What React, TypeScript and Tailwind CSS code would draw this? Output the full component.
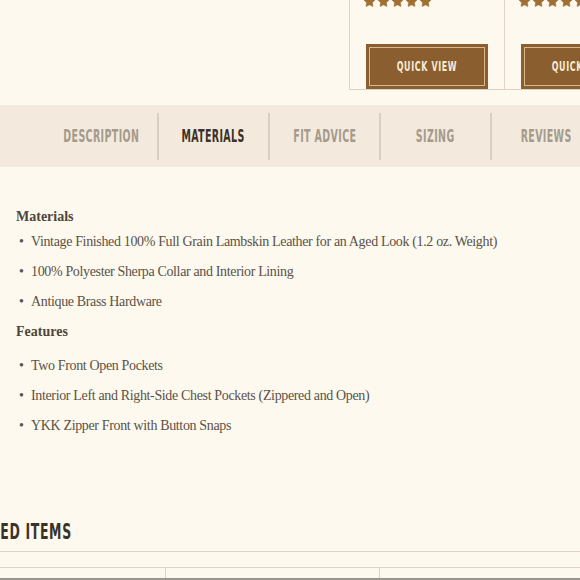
import { Star, StarHalf } from "lucide-react";

const cond = "font-['DejaVu_Sans_Condensed',sans-serif] font-bold uppercase whitespace-nowrap inline-block";
const serif = "font-['Liberation_Serif',serif]";

function Stars({ half }: { half?: boolean }) {
  return (
    <div className="flex gap-[1px] -mt-[5px]">
      {[0, 1, 2, 3].map((i) => (
        <Star key={i} size={13} className="fill-[#a06f32] text-[#a06f32]" strokeWidth={1} />
      ))}
      {half ? (
        <StarHalf size={13} className="fill-[#a06f32] text-[#a06f32]" strokeWidth={1} />
      ) : (
        <Star size={13} className="fill-[#a06f32] text-[#a06f32]" strokeWidth={1} />
      )}
    </div>
  );
}

function Card({ half }: { half?: boolean }) {
  return (
    <div className="w-[155px] h-[90px] shrink-0 border-r border-b border-[#ddd3c2] flex flex-col pl-[13px]">
      <Stars half={half} />
      <button className="mt-auto ml-[3px] w-[122px] h-[45px] bg-[#8b5e2f] p-[3px]">
        <div className="h-full border border-[#d9b98c] flex items-center justify-center text-[#f6ead6]">
          <span className={`text-[14px] tracking-[1px] scale-x-[0.63] ${cond}`}>Quick View</span>
        </div>
      </button>
    </div>
  );
}

const tabs = ["Description", "Materials", "Fit Advice", "Sizing", "Reviews"];

export default function App() {
  return (
    <div className="w-[580px] h-[580px] overflow-hidden bg-[#fdf9ef] text-[#5b5146]">
      <div className="h-[105px] flex pl-[349px]">
        <div className="flex border-l border-[#ddd3c2] h-[90px]">
          <Card />
          <Card half />
        </div>
      </div>

      <div className="h-[62px] bg-[#f3eadd] flex items-center pl-[46px] overflow-hidden">
        {tabs.map((t, i) => (
          <div
            key={t}
            className={`w-[111px] shrink-0 h-[47px] flex items-center justify-center pt-[2px] ${
              i > 0 ? "border-l-2 border-[#d9cfbf]" : ""
            } ${i === 1 ? "text-[#3b3229]" : "text-[#a59a8b]"}`}
          >
            <span className={`text-[17px] tracking-[0.6px] scale-x-[0.62] ${cond}`}>{t}</span>
          </div>
        ))}
      </div>

      <div className={`pt-[40px] pl-[16px] text-[14px] tracking-[-0.35px] ${serif}`}>
        <div className="font-bold leading-[20px] text-[#4f453a] tracking-normal">Materials</div>
        <ul>
          {[
            "Vintage Finished 100% Full Grain Lambskin Leather for an Aged Look (1.2 oz. Weight)",
            "100% Polyester Sherpa Collar and Interior Lining",
            "Antique Brass Hardware",
          ].map((x) => (
            <li key={x} className="leading-[30px] flex">
              <span className="w-[15px] pl-[3px]">•</span>
              {x}
            </li>
          ))}
        </ul>
        <div className="font-bold leading-[30px] text-[#4f453a] tracking-normal">Features</div>
        <ul className="mt-[4px]">
          {[
            "Two Front Open Pockets",
            "Interior Left and Right-Side Chest Pockets (Zippered and Open)",
            "YKK Zipper Front with Button Snaps",
          ].map((x) => (
            <li key={x} className="leading-[30px] flex">
              <span className="w-[15px] pl-[3px]">•</span>
              {x}
            </li>
          ))}
        </ul>
      </div>

      <div className="mt-[78px]">
        <div className="w-[72px] flex justify-end h-[26px] items-center">
          <span className={`text-[21px] leading-[26px] text-[#3b3229] tracking-[1px] scale-x-[0.66] origin-right ${cond}`}>
            Related Items
          </span>
        </div>
        <div className="mt-[6px] border-t border-[#ddd3c2] h-[16px]" />
        <div className="grid grid-cols-[165px_214px_1fr] border-t border-[#ddd3c2] h-[13px] border-b-2 border-b-[#9a958c]">
          <div />
          <div className="border-l border-[#ddd3c2]" />
          <div className="border-l border-[#ddd3c2]" />
        </div>
      </div>
    </div>
  );
}
